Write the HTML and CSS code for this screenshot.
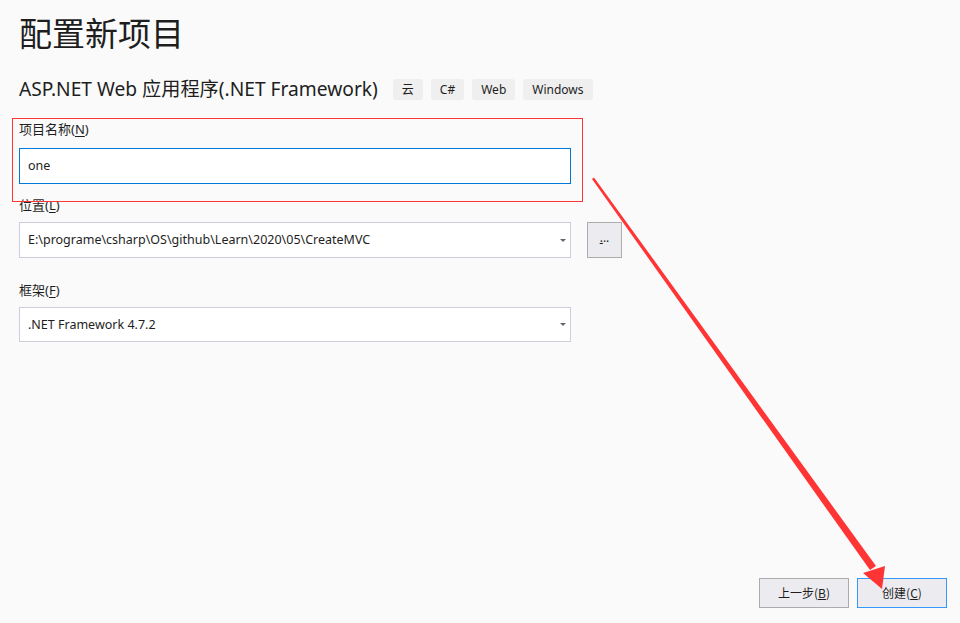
FILE: index.html
```html
<!DOCTYPE html>
<html>
<head>
	<meta charset="utf-8">
	<title>配置新项目</title>
	<link rel="stylesheet" href="styles.css">
</head>
<body>

	<div class="page">
		<h1 class="title">配置新项目</h1>

		<div class="sub_row">
			<span class="sub_title">ASP.NET Web 应用程序(.NET Framework)</span>
			<span class="tag">云</span>
			<span class="tag">C#</span>
			<span class="tag">Web</span>
			<span class="tag">Windows</span>
		</div>

		<div class="field first">
			<div class="label">项目名称(<u>N</u>)</div>
			<div class="input focus">one</div>
		</div>

		<div class="field second">
			<div class="label">位置(<u>L</u>)</div>
			<div class="row">
				<div class="input select">E:\programe\csharp\OS\github\Learn\2020\05\CreateMVC<span class="caret"></span></div>
				<div class="browse"><u>.</u>..</div>
			</div>
		</div>

		<div class="field third">
			<div class="label">框架(<u>F</u>)</div>
			<div class="input select short">.NET Framework 4.7.2<span class="caret"></span></div>
		</div>

		<div class="footer">
			<div class="btn">上一步(<u>B</u>)</div>
			<div class="btn primary">创建(<u>C</u>)</div>
		</div>
	</div>

	<div class="mark_box"></div>

	<svg class="mark_arrow" width="960" height="623" viewBox="0 0 960 623">
		<polygon points="592,179 594,177.5 876,566 870,570" fill="#ff3434"/>
		<polygon points="863,573 885,566 882,589" fill="#ff3434"/>
	</svg>

</body>
</html>
```

FILE: styles.css
```css
body {margin: 0; background: #fafafa; color: #1e1e1e;
		font-family: "Noto Sans", "Noto Sans CJK SC", sans-serif;}
.page {height: 623px; box-sizing: border-box; padding: 10px 13px 15px 19px;
		display: flex; flex-direction: column;}
.title {margin: 0; font-size: 33px; line-height: 44px; font-weight: normal;
		font-family: "Noto Sans CJK SC", sans-serif;}
.sub_row {margin-top: 23px; height: 24px; display: flex; align-items: center;}
.sub_title {font-size: 19.2px; line-height: 24px; margin-right: 15px;}
.tag {height: 21px; line-height: 21px; padding: 0 9px; margin-right: 8px; font-size: 12px;
		background: #efefef; border-radius: 3px;}
.label {font-size: 13px; line-height: 20px; height: 20px;}
.label u {text-underline-offset: 2px;}
.first {margin-top: 18px;}
.second {margin-top: 11px;}
.third {margin-top: 22px;}
.input {margin-top: 9px; width: 552px; height: 36px; box-sizing: border-box; padding: 0 8px;
		background: #fff; border: 1px solid #cccedb; font-size: 12.5px; line-height: 34px;
		position: relative;}
.focus {border-color: #0078d7;}
.second .label + .row {margin-top: 7px;}
.row {display: flex; align-items: flex-start;}
.row .input {margin-top: 0;}
.third .input {margin-top: 7px; height: 35px; line-height: 33px;}
.caret {position: absolute; right: 4px; top: 16px; width: 0; height: 0;
		border-left: 3px solid transparent; border-right: 3px solid transparent;
		border-top: 3px solid #666;}
.third .caret {top: 15px;}
.browse {margin-left: 16px; width: 35px; height: 36px; box-sizing: border-box;
		background: #ececf0; border: 1px solid #acacac; font-size: 12px; line-height: 30px;
		text-align: center;}
.footer {margin-top: auto; display: flex; justify-content: flex-end; gap: 8px;}
.btn {width: 90px; height: 30px; box-sizing: border-box; background: #ececf0;
		border: 1px solid #acacac; font-size: 12px; line-height: 28px; text-align: center;
		font-family: "Noto Sans CJK SC", sans-serif;}
.primary {border-color: #3399ff;}
.mark_box {position: absolute; left: 12px; top: 118px; width: 569px; height: 82px;
		border: 1px solid #ff3434;}
.mark_arrow {position: absolute; left: 0; top: 0; pointer-events: none;}
```
